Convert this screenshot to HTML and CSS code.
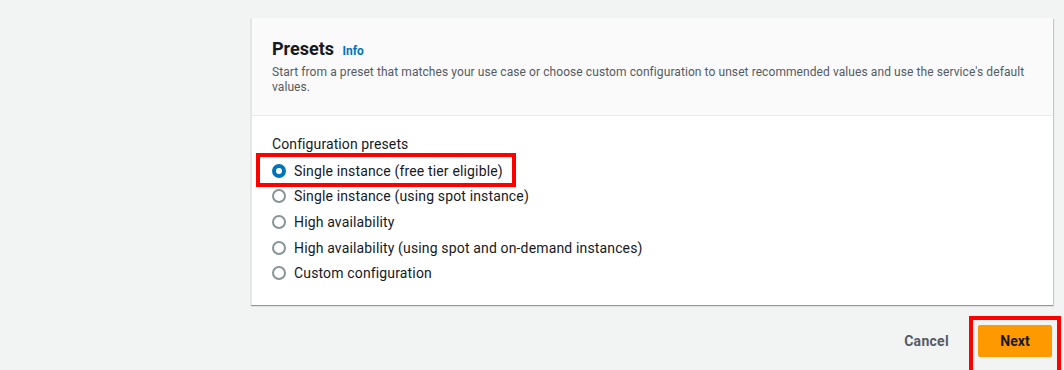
FILE: index.html
```html
<!doctype html>
<html lang="en">
  <head>
    <meta charset="UTF-8" />
    <meta name="viewport" content="width=device-width, initial-scale=1.0" />
    <title>Presets</title>
    <link rel="stylesheet" href="styles.css">
  </head>
  <body>
    <div class="page">
      <section class="card">
        <header class="card-header">
          <h2>Presets <a href="#" class="info">Info</a></h2>
          <p class="desc">
            Start from a preset that matches your use case or choose custom
            configuration to unset recommended values and use the service's
            default values.
          </p>
        </header>
        <div class="card-body">
          <div class="group-label">Configuration presets</div>
          <label class="radio highlight">
            <input type="radio" name="preset" checked />
            <span class="dot"></span>
            Single instance (free tier eligible)
          </label>
          <label class="radio">
            <input type="radio" name="preset" />
            <span class="dot"></span>
            Single instance (using spot instance)
          </label>
          <label class="radio">
            <input type="radio" name="preset" />
            <span class="dot"></span>
            High availability
          </label>
          <label class="radio">
            <input type="radio" name="preset" />
            <span class="dot"></span>
            High availability (using spot and on-demand instances)
          </label>
          <label class="radio">
            <input type="radio" name="preset" />
            <span class="dot"></span>
            Custom configuration
          </label>
        </div>
      </section>

      <div class="actions">
        <button class="btn-link">Cancel</button>
        <div class="next-wrap">
          <button class="btn-primary">Next</button>
        </div>
      </div>
    </div>
  </body>
</html>
```

FILE: styles.css
```css
html, body {
  margin: 0;
  padding: 0;
}

body {
  background: #f2f3f3;
  color: #16191f;
  font-family: Roboto, "Liberation Sans", sans-serif;
  font-size: 14px;
  overflow: hidden;
}

.page {
  padding: 18px 12px 0 251px;
}

.card {
  width: 801px;
  background: #fff;
  border-left: 1px solid #e3e6e6;
  box-shadow: 0 1px 1px 0 rgba(0, 28, 36, 0.3), 1px 1px 1px 0 rgba(0, 28, 36, 0.15);
}

.card-header {
  background: #fafafa;
  padding: 19px 20px 20px 20px;
  border-bottom: 1px solid #eaeded;
}

.card-header h2 {
  margin: 0;
  font-size: 18px;
  font-weight: 700;
  line-height: 24px;
}

.info {
  font-size: 12px;
  font-weight: 700;
  color: #0073bb;
  text-decoration: none;
  margin-left: 4px;
}

.desc {
  margin: 2px 0 0;
  font-size: 12px;
  line-height: 15px;
  letter-spacing: 0.08px;
  color: #545b64;
}

.card-body {
  padding: 18px 20px 19px;
}

.group-label {
  line-height: 20px;
  margin-bottom: 4px;
  letter-spacing: 0.1px;
}

.radio {
  display: flex;
  align-items: center;
  gap: 8px;
  width: fit-content;
  height: 25.6px;
  padding: 0 8px 0 0;
  position: relative;
  letter-spacing: 0.15px;
  cursor: pointer;
}

.radio input {
  display: none;
}

.dot {
  width: 14px;
  height: 14px;
  box-sizing: border-box;
  border: 2px solid #879596;
  border-radius: 50%;
  background: #fff;
}

.radio input:checked + .dot {
  border: 4px solid #0073bb;
}

.highlight::before {
  content: "";
  position: absolute;
  left: -16px;
  right: -5px;
  top: -5px;
  bottom: -3px;
  border: 4px solid #ff0000;
}

.actions {
  display: flex;
  justify-content: flex-end;
  align-items: flex-start;
  gap: 12px;
  width: 801px;
  padding-top: 11px;
}

.btn-link {
  background: none;
  border: none;
  font: inherit;
  font-weight: 700;
  line-height: 17px;
  letter-spacing: 0.3px;
  color: #545b64;
  padding: 4px 8px;
  margin-top: 13px;
}

.next-wrap {
  border: 4px solid #ff0000;
  padding: 5px 5px 14px;
  margin-right: -9px;
}

.btn-primary {
  display: block;
  background: #ff9900;
  border: 1px solid #ff9900;
  border-radius: 2px;
  font: inherit;
  font-weight: 700;
  color: #16191f;
  width: 74px;
  height: 32px;
}
```
